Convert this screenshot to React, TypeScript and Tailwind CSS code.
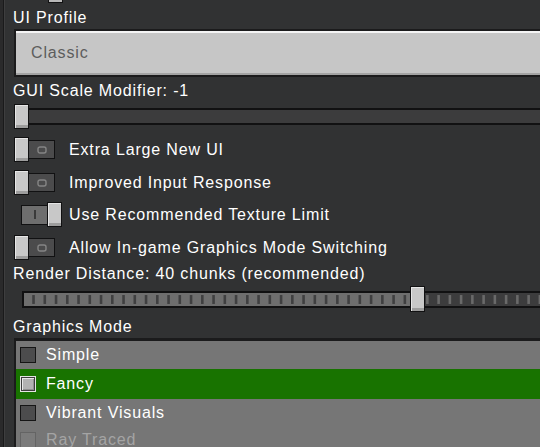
import React from "react";

const FONT = "font-['Liberation_Sans',Arial,sans-serif] text-[16px] leading-[16px] tracking-[0.85px]";

function Thumb({ h = 25 }: { h?: number }) {
  return (
    <div
      className={`w-[15px] ${h === 26 ? "h-[26px]" : "h-[25px]"} shrink-0 border border-[#111112] bg-[#c8c8c8] shadow-[inset_1px_1px_0_#e6e6e6,inset_0_-3px_0_#9d9d9d]`}
    />
  );
}

function ToggleOff({ label }: { label: string }) {
  return (
    <div className="flex h-[25px] shrink-0 items-center pl-[9px]">
      <Thumb />
      <div className="-ml-px flex h-[19px] w-[27px] shrink-0 items-center justify-center border border-[#111112] bg-[#4b4b4c]">
        <svg width="10" height="8" viewBox="0 0 10 8">
          <rect x="1" y="1" width="8" height="6" rx="2" fill="none" stroke="#858585" strokeWidth="1.4" />
        </svg>
      </div>
      <span className="ml-[14px] whitespace-nowrap text-white">{label}</span>
    </div>
  );
}

function ToggleOn({ label }: { label: string }) {
  return (
    <div className="flex h-[25px] shrink-0 items-center pl-[16px]">
      <div className="flex h-[20px] w-[27px] shrink-0 items-center justify-center border border-[#111112] bg-[#6e6e6e]">
        <div className="h-[9px] w-[2px] bg-[#3a3a3a]" />
      </div>
      <div className="-ml-px">
        <Thumb />
      </div>
      <span className="ml-[7px] whitespace-nowrap text-white">{label}</span>
    </div>
  );
}

function Notches() {
  const items = [];
  for (let k = 0; k < 48; k++) {
    const x = 8.3 + k * 11.333;
    items.push(
      <rect key={k} x={x} y={0} width={2.6} height={9} fill={k < 34 ? "#3f3f40" : "#6a6a6a"} />
    );
  }
  return (
    <svg width="560" height="9" viewBox="0 0 560 9" className="block">
      {items}
    </svg>
  );
}

function Checkbox({ state }: { state: "off" | "on" | "disabled" }) {
  if (state === "on") {
    return (
      <div className="h-[16px] w-[16px] shrink-0 border border-[#e4e4e4] bg-[#3c3c3c] p-px">
        <div className="h-full w-full bg-[#b2b2b2] shadow-[inset_1px_1px_0_#e8e8e8,inset_-1px_-1px_0_#8f8f8f]" />
      </div>
    );
  }
  if (state === "disabled") {
    return <div className="h-[16px] w-[16px] shrink-0 border border-[#646464] bg-[#7b7b7b]" />;
  }
  return <div className="h-[16px] w-[16px] shrink-0 border border-[#151515] bg-[#4c4c4d]" />;
}

export default function App() {
  return (
    <div className={`flex h-[447px] w-[540px] items-start overflow-hidden bg-[#313233] ${FONT}`}>
      <div className="h-full w-[3px] shrink-0 bg-[#2a2a2b]" />
      <div className="h-full w-px shrink-0 bg-[#1a1a1b]" />
      <div className="h-full w-px shrink-0 bg-[#3e3e3f]" />
      <div className="flex min-w-0 flex-1 flex-col">
        {/* remnant of thumb above */}
        <div className="ml-[43px] h-[3px] w-[15px] shrink-0 border-x border-b border-[#111112] bg-[#b8b8b8]" />

        <div className="mt-[7px] h-[16px] shrink-0 pl-[8px] text-white">UI Profile</div>

        <div className="ml-[9px] mt-[3px] flex h-[48px] w-[560px] shrink-0 items-center border-2 border-[#1b1b1c] bg-[#c6c6c6] pl-[15px] shadow-[inset_0_2px_0_#f4f4f4,inset_0_-2px_0_#a3a3a3]">
          <span className="text-[#5d5d5d]">Classic</span>
        </div>

        <div className="mt-[6px] h-[16px] shrink-0 pl-[8px] text-white">GUI Scale Modifier: -1</div>

        {/* slider 1 */}
        <div className="relative ml-[9px] mt-[5px] flex h-[25px] w-[560px] shrink-0 items-center">
          <div className="h-[17px] w-full border-2 border-[#111112] bg-[#3c3c3d]" />
          <div className="absolute left-0 top-0">
            <Thumb />
          </div>
        </div>

        <div className="mt-[8px] shrink-0">
          <ToggleOff label="Extra Large New UI" />
        </div>
        <div className="mt-[8px] shrink-0">
          <ToggleOff label="Improved Input Response" />
        </div>
        <div className="mt-[7px] shrink-0">
          <ToggleOn label="Use Recommended Texture Limit" />
        </div>
        <div className="mt-[8px] shrink-0">
          <ToggleOff label="Allow In-game Graphics Mode Switching" />
        </div>

        <div className="mt-[6px] h-[16px] shrink-0 whitespace-nowrap pl-[8px] text-white">Render Distance: 40 chunks (recommended)</div>

        {/* slider 2 */}
        <div className="relative ml-[17px] mt-[4px] flex h-[26px] w-[560px] shrink-0 items-center">
          <div className="flex h-[17px] w-full items-center border-2 border-[#111112] bg-[linear-gradient(90deg,#6e6e6e_0px,#6e6e6e_390px,#3c3c3d_390px)]">
            <Notches />
          </div>
          <div className="absolute left-[388px] top-0">
            <Thumb h={26} />
          </div>
        </div>

        <div className="mt-[7px] h-[16px] shrink-0 pl-[8px] text-white">Graphics Mode</div>

        <div className="ml-[9px] mt-[3px] w-[560px] shrink-0 border-l-2 border-t-[3px] border-[#1b1b1c] bg-[#767676]">
          <div className="flex h-[28px] items-center pl-[4px]">
            <Checkbox state="off" />
            <span className="ml-[10px] text-white">Simple</span>
          </div>
          <div className="flex h-[30px] items-center bg-[#187300] pl-[4px]">
            <Checkbox state="on" />
            <span className="ml-[10px] text-white">Fancy</span>
          </div>
          <div className="flex h-[27px] items-center pl-[4px]">
            <Checkbox state="off" />
            <span className="ml-[10px] text-white">Vibrant Visuals</span>
          </div>
          <div className="flex h-[27px] items-center pl-[4px]">
            <Checkbox state="disabled" />
            <span className="ml-[10px] text-[#a4a4a4]">Ray Traced</span>
          </div>
        </div>
      </div>
    </div>
  );
}
